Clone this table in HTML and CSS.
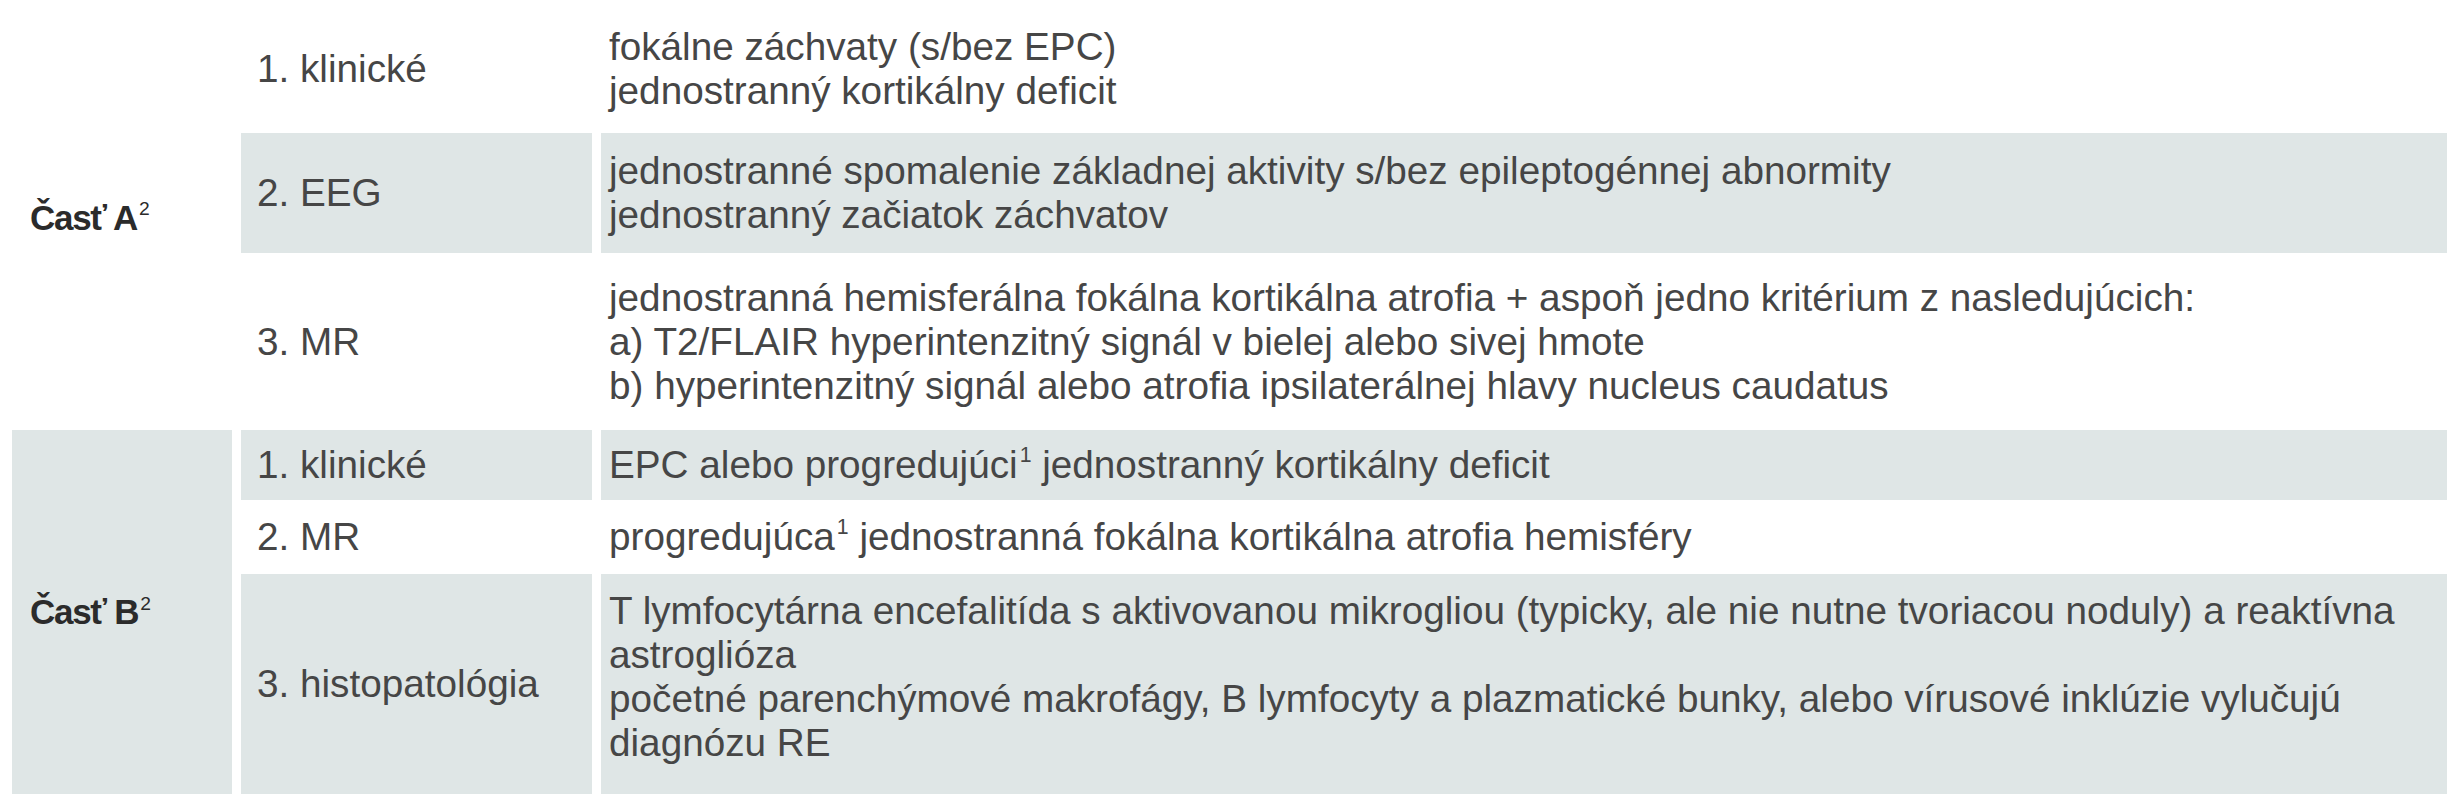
FILE: index.html
```html
<!DOCTYPE html>
<html lang="sk">
<head>
<meta charset="utf-8">
<title>Kritériá</title>
<link rel="stylesheet" href="styles.css">
</head>
<body>
<div class="criteria">
  <div class="part part-a"><div>Časť A<sup>2</sup></div></div>
  <div class="label"><div>1. klinické</div></div>
  <div class="desc"><div>fokálne záchvaty (s/bez EPC)<br>jednostranný kortikálny deficit</div></div>
  <div class="label shaded"><div>2. EEG</div></div>
  <div class="desc shaded"><div>jednostranné spomalenie základnej aktivity s/bez epileptogénnej abnormity<br>jednostranný začiatok záchvatov</div></div>
  <div class="label"><div>3. MR</div></div>
  <div class="desc"><div>jednostranná hemisferálna fokálna kortikálna atrofia + aspoň jedno kritérium z nasledujúcich:<br>a) T2/FLAIR hyperintenzitný signál v bielej alebo sivej hmote<br>b) hyperintenzitný signál alebo atrofia ipsilaterálnej hlavy nucleus caudatus</div></div>

  <div class="part part-b shaded"><div>Časť B<sup>2</sup></div></div>
  <div class="label shaded"><div>1. klinické</div></div>
  <div class="desc shaded"><div>EPC alebo progredujúci<sup>1</sup> jednostranný kortikálny deficit</div></div>
  <div class="label"><div>2. MR</div></div>
  <div class="desc"><div>progredujúca<sup>1</sup> jednostranná fokálna kortikálna atrofia hemisféry</div></div>
  <div class="label shaded"><div>3. histopatológia</div></div>
  <div class="desc shaded desc-top"><div>T lymfocytárna encefalitída s aktivovanou mikrogliou (typicky, ale nie nutne tvoriacou noduly) a reaktívna<br>astroglióza<br>početné parenchýmové makrofágy, B lymfocyty a plazmatické bunky, alebo vírusové inklúzie vylučujú<br>diagnózu RE</div></div>
</div>
</body>
</html>
```

FILE: styles.css
```css
html, body {
  margin: 0;
  padding: 0;
  background: #ffffff;
}

body {
  font-family: "Liberation Sans", Arial, sans-serif;
  font-weight: 400;
  font-size: 38.7px;
  line-height: 44px;
  color: #464646;
}

.criteria {
  display: grid;
  grid-template-columns: 220px 351px 1846px;
  grid-template-rows: 120px 120px 169px 70px 66px 220px;
  column-gap: 9px;
  row-gap: 4px;
  padding: 9px 0 0 12px;
}

.criteria > div {
  display: flex;
  align-items: center;
}

.part {
  grid-column: 1;
  padding-left: 18px;
  font-size: 35px;
  font-weight: 700;
  letter-spacing: -1.3px;
  color: #2b2b2b;
}

.part-a {
  grid-row: 1 / span 3;
}

.part-b {
  grid-row: 4 / span 3;
}

.label {
  grid-column: 2;
  padding-left: 16px;
}

.desc {
  grid-column: 3;
  padding-left: 8px;
}

.desc-top {
  padding-bottom: 14px;
}

.shaded {
  background: #dfe6e6;
}

sup {
  font-size: 0.55em;
  line-height: 0;
  vertical-align: 0.75em;
  margin-left: 2px;
  letter-spacing: 0;
  font-weight: 400;
}
```
